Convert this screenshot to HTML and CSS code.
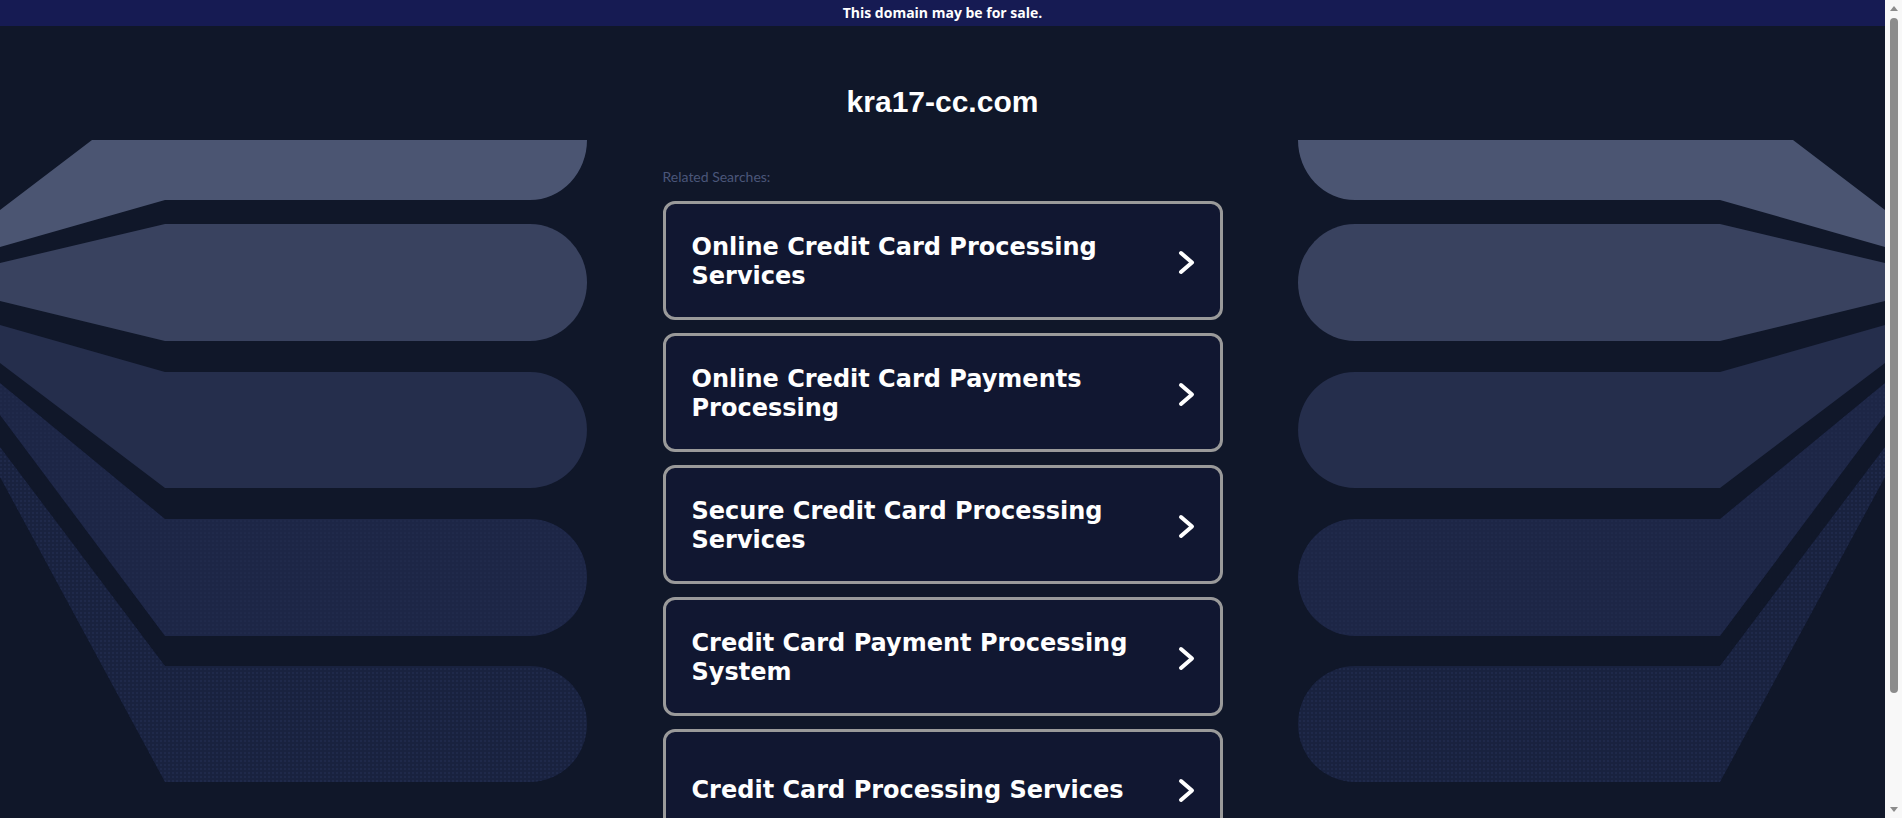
FILE: index.html
```html
<!DOCTYPE html>
<html lang="en">
<head>
<meta charset="utf-8">
<title>kra17-cc.com</title>
<link rel="stylesheet" href="styles.css">
</head>
<body>
<div class="topbar">This domain may be for sale.</div>

<svg class="deco deco-left" width="587" height="818" viewBox="0 0 587 818" aria-hidden="true">
  <defs>
    <pattern id="dotsA" width="4" height="4" patternUnits="userSpaceOnUse">
      <circle cx="1" cy="1" r="0.6" fill="#28335a"/>
    </pattern>
    <pattern id="dotsB" width="4" height="4" patternUnits="userSpaceOnUse">
      <circle cx="1" cy="1" r="0.7" fill="#27345c"/>
    </pattern>
  </defs>
  <path fill="#4b5572" d="M92,140 H587 A57 60 0 0 1 530,200 H165 L0,247 V210 Z"/>
  <path fill="#39425f" d="M0,263 L165,224 H530 A57 58.5 0 0 1 530,341 H165 L0,301 Z"/>
  <path fill="#252e4c" d="M0,325 L165,372 H530 A57 58 0 0 1 530,488 H165 L0,363 Z"/>
  <path fill="#1d2646" d="M0,383 L165,519 H530 A57 58.5 0 0 1 530,636 H165 L0,415 Z"/>
  <path fill="url(#dotsA)" d="M0,383 L165,519 H530 A57 58.5 0 0 1 530,636 H165 L0,415 Z"/>
  <path fill="#19223f" d="M0,447 L165,666 H530 A57 58 0 0 1 530,782 H165 L0,477 Z"/>
  <path fill="url(#dotsB)" d="M0,447 L165,666 H530 A57 58 0 0 1 530,782 H165 L0,477 Z"/>
</svg>

<svg class="deco deco-right" width="587" height="818" viewBox="0 0 587 818" aria-hidden="true">
  <path fill="#4b5572" d="M92,140 H587 A57 60 0 0 1 530,200 H165 L0,247 V210 Z"/>
  <path fill="#39425f" d="M0,263 L165,224 H530 A57 58.5 0 0 1 530,341 H165 L0,301 Z"/>
  <path fill="#252e4c" d="M0,325 L165,372 H530 A57 58 0 0 1 530,488 H165 L0,363 Z"/>
  <path fill="#1d2646" d="M0,383 L165,519 H530 A57 58.5 0 0 1 530,636 H165 L0,415 Z"/>
  <path fill="url(#dotsA)" d="M0,383 L165,519 H530 A57 58.5 0 0 1 530,636 H165 L0,415 Z"/>
  <path fill="#19223f" d="M0,447 L165,666 H530 A57 58 0 0 1 530,782 H165 L0,477 Z"/>
  <path fill="url(#dotsB)" d="M0,447 L165,666 H530 A57 58 0 0 1 530,782 H165 L0,477 Z"/>
</svg>

<main class="content">
  <h1 class="domain">kra17-cc.com</h1>
  <div class="related">Related Searches:</div>
  <ul class="links">
    <li><a class="card" href="#"><span class="card-text">Online Credit Card Processing Services</span><svg class="chev" viewBox="0 0 17 25" width="17" height="25"><path d="M3 3 L14 12.5 L3 22"/></svg></a></li>
    <li><a class="card" href="#"><span class="card-text">Online Credit Card Payments Processing</span><svg class="chev" viewBox="0 0 17 25" width="17" height="25"><path d="M3 3 L14 12.5 L3 22"/></svg></a></li>
    <li><a class="card" href="#"><span class="card-text">Secure Credit Card Processing Services</span><svg class="chev" viewBox="0 0 17 25" width="17" height="25"><path d="M3 3 L14 12.5 L3 22"/></svg></a></li>
    <li><a class="card" href="#"><span class="card-text">Credit Card Payment Processing System</span><svg class="chev" viewBox="0 0 17 25" width="17" height="25"><path d="M3 3 L14 12.5 L3 22"/></svg></a></li>
    <li><a class="card" href="#"><span class="card-text">Credit Card Processing Services</span><svg class="chev" viewBox="0 0 17 25" width="17" height="25"><path d="M3 3 L14 12.5 L3 22"/></svg></a></li>
  </ul>
</main>

<div class="scrollbar" aria-hidden="true">
  <span class="sb-arrow sb-up"></span>
  <span class="sb-thumb"></span>
  <span class="sb-arrow sb-down"></span>
</div>
</body>
</html>
```

FILE: styles.css
```css
html, body {
  margin: 0;
  padding: 0;
}

html {
  background: #101729;
}

body {
  position: relative;
  margin-right: 17px;
  background: #101729;
  color: #ffffff;
  font-family: "Liberation Sans", Arial, sans-serif;
}

.topbar {
  position: relative;
  z-index: 2;
  height: 26px;
  line-height: 25px;
  background: #161b53;
  color: #ffffff;
  text-align: center;
  font-family: "Open Sans", sans-serif;
  font-weight: 700;
  font-size: 14px;
}

.deco {
  position: absolute;
  top: 0;
  z-index: 0;
  display: block;
}

.deco-left {
  left: 0;
}

.deco-right {
  right: 0;
  transform: scaleX(-1);
}

.content {
  position: relative;
  z-index: 1;
  width: 560px;
  margin: 0 auto;
  padding-bottom: 100px;
}

.domain {
  margin: 58px 0 0;
  font-family: "Liberation Sans", Arial, sans-serif;
  font-weight: 700;
  font-size: 30px;
  line-height: 36px;
  text-align: center;
  color: #ffffff;
}

.related {
  margin-top: 49px;
  font-family: "Lato", sans-serif;
  font-size: 14px;
  line-height: 16px;
  color: #4b5679;
}

.links {
  list-style: none;
  margin: 16px 0 0;
  padding: 0;
  display: flex;
  flex-direction: column;
  gap: 13px;
}

.card {
  box-sizing: border-box;
  height: 119px;
  display: flex;
  align-items: center;
  justify-content: space-between;
  gap: 16px;
  padding: 3px 25px 0 26px;
  border: 3px solid #9a9a9a;
  border-radius: 12px;
  background: #111731;
  color: #ffffff;
  text-decoration: none;
}

.card-text {
  font-family: "DejaVu Sans", Verdana, sans-serif;
  font-weight: 700;
  font-size: 24px;
  line-height: 29px;
}

.chev {
  flex: none;
  display: block;
}

.chev path {
  fill: none;
  stroke: #ffffff;
  stroke-width: 4;
  stroke-linecap: round;
  stroke-linejoin: round;
}

.scrollbar {
  position: fixed;
  top: 0;
  right: 0;
  width: 17px;
  height: 100vh;
  background: #f8f8f8;
  z-index: 5;
}

.sb-thumb {
  position: absolute;
  top: 18px;
  left: 5px;
  width: 8px;
  height: 675px;
  border-radius: 4px;
  background: #8c8c8c;
}

.sb-arrow {
  position: absolute;
  left: 5px;
  width: 0;
  height: 0;
  border-left: 4px solid transparent;
  border-right: 4px solid transparent;
}

.sb-up {
  top: 6px;
  border-bottom: 5px solid #8c8c8c;
}

.sb-down {
  bottom: 6px;
  border-top: 5px solid #8c8c8c;
}
```
